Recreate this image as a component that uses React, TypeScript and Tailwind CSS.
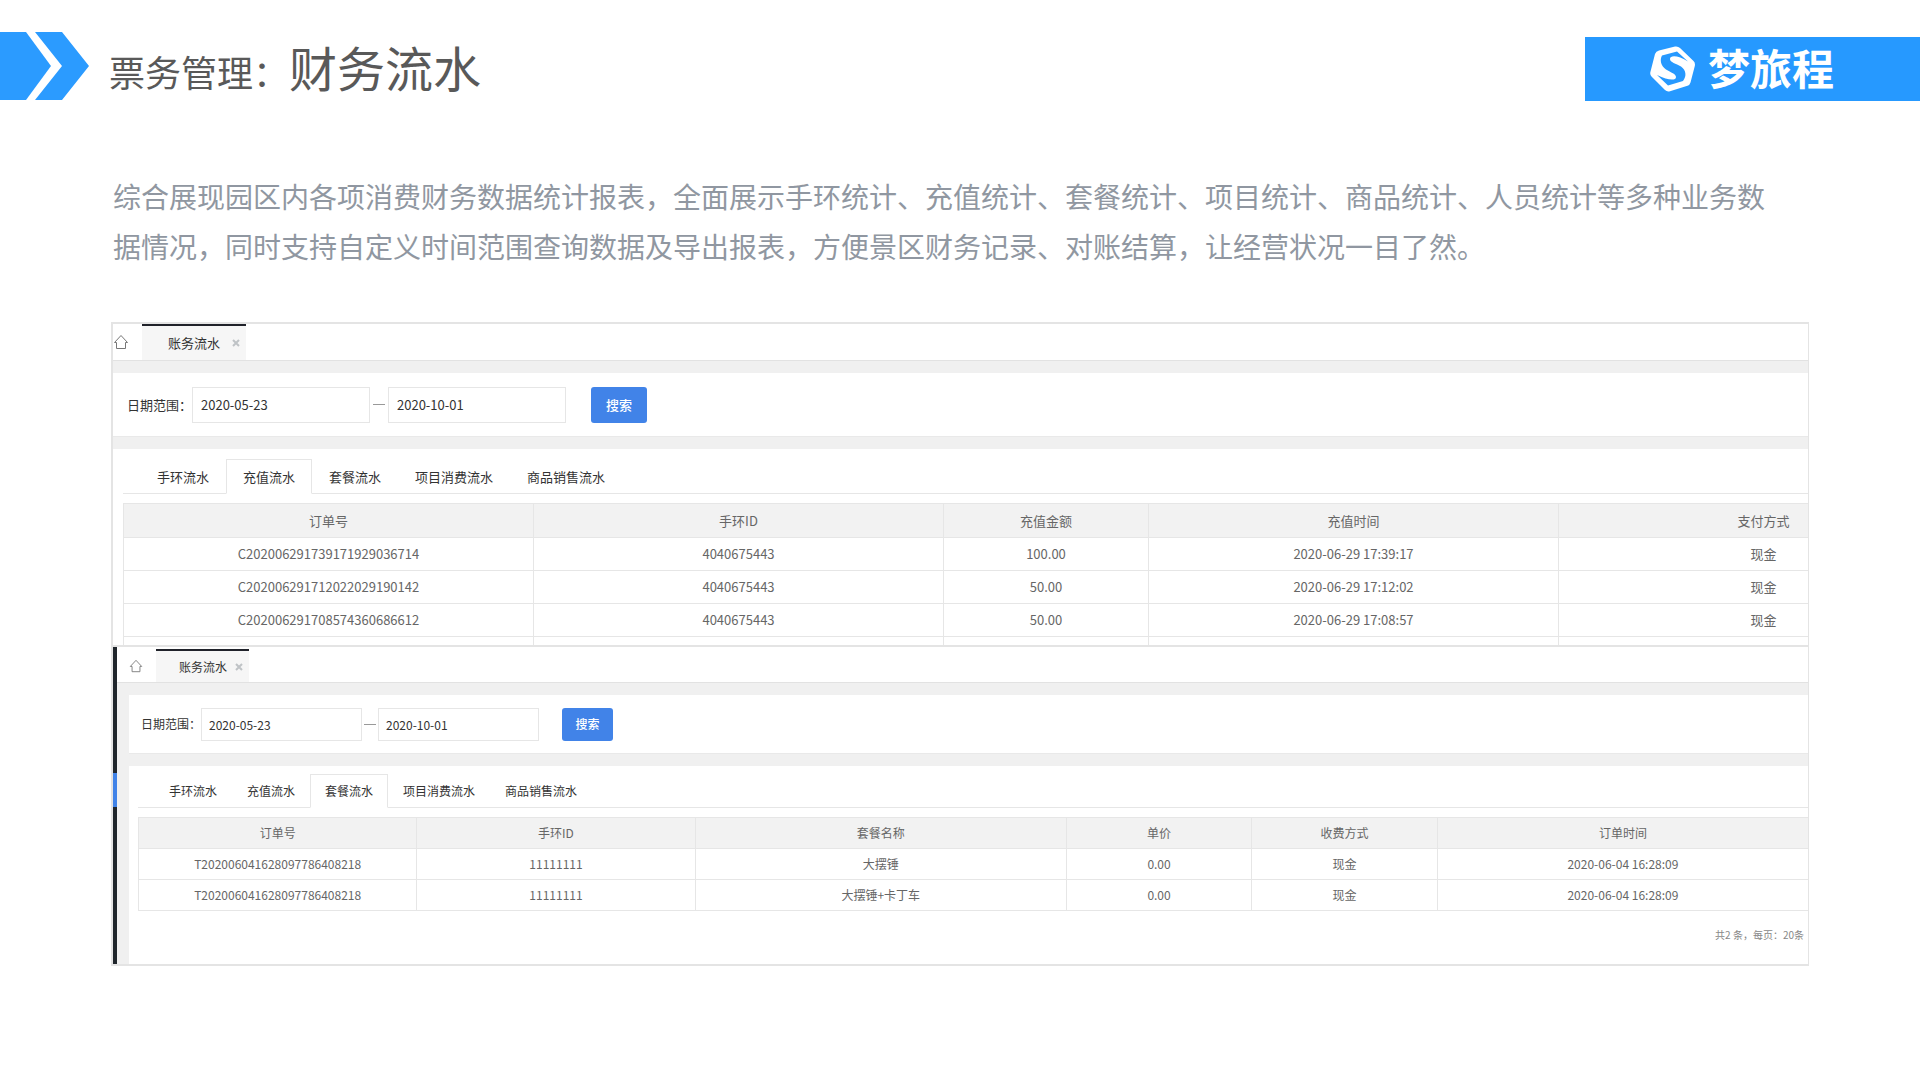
import React, { useState } from "react";

type Size = "lg" | "sm";

interface FlowPanelProps {
  id: string;
  size: Size;
  defaultTab: string;
  columns: { title: string; width: string }[];
  rows: string[][];
  footer?: string;
}

const TABS = ["手环流水", "充值流水", "套餐流水", "项目消费流水", "商品销售流水"];

const rechargeColumns = [
  { title: "订单号", width: "w-[410px]" },
  { title: "手环ID", width: "w-[410px]" },
  { title: "充值金额", width: "w-[205px]" },
  { title: "充值时间", width: "w-[410px]" },
  { title: "支付方式", width: "w-[410px]" },
];

const rechargeRows = [
  ["C202006291739171929036714", "4040675443", "100.00", "2020-06-29 17:39:17", "现金"],
  ["C202006291712022029190142", "4040675443", "50.00", "2020-06-29 17:12:02", "现金"],
  ["C202006291708574360686612", "4040675443", "50.00", "2020-06-29 17:08:57", "现金"],
  ["", "", "", "", ""],
];

const packageColumns = [
  { title: "订单号", width: "w-3/18" },
  { title: "手环ID", width: "w-3/18" },
  { title: "套餐名称", width: "w-4/18" },
  { title: "单价", width: "w-2/18" },
  { title: "收费方式", width: "w-2/18" },
  { title: "订单时间", width: "w-4/18" },
];

const packageRows = [
  ["T202006041628097786408218", "11111111", "大摆锤", "0.00", "现金", "2020-06-04 16:28:09"],
  ["T202006041628097786408218", "11111111", "大摆锤+卡丁车", "0.00", "现金", "2020-06-04 16:28:09"],
];

// Class sets for the two zoom levels of the back office
const sizes = {
  lg: {
    text: "text-[13px]",
    bar: "h-9",
    home: "w-[29px]",
    homeIcon: "h-4 w-4",
    pageTab: "w-[104px] pl-[26px] pr-1.5",
    body: "gap-3 pt-3",
    search: "h-16 pl-[14px]",
    label: "w-[65px]",
    input: "h-9 w-[178px] px-2",
    dash: "w-[18px]",
    button: "ml-[25px] h-9 w-14",
    card: "pt-[10px] pl-[10px]",
    tabs: "h-[35px] pl-[17px] mb-[9px]",
    tab: "px-4",
    table: "w-[1845px]",
    headRow: "h-[34px]",
    row: "h-[33px]",
  },
  sm: {
    text: "text-[12px]",
    bar: "h-[33px] pt-0.5",
    home: "w-[39px] pl-3",
    homeIcon: "h-[14px] w-[14px]",
    pageTab: "w-[93px] pl-[23px] pr-1.5",
    body: "gap-3 pt-3 pl-3",
    search: "h-[59px] pl-3",
    label: "w-[60px]",
    input: "h-[33px] w-[161px] px-[7px]",
    dash: "w-4",
    button: "ml-[23px] h-[33px] w-[51px]",
    card: "pt-2 pl-[9px]",
    tabs: "h-[34px] pl-4 mb-[9px]",
    tab: "px-[14px]",
    table: "w-[calc(100%+1px)]",
    headRow: "h-[31px]",
    row: "h-[31px]",
  },
};

function Chevrons() {
  return (
    <svg width="89" height="68" viewBox="0 0 89 68" fill="#2b9bff" aria-hidden="true">
      <path d="M0 0H26L51 34L26 68H0Z" />
      <path d="M35 0H62L89 34L62 68H35L62 34Z" />
    </svg>
  );
}

function Logo() {
  return (
    <svg width="46" height="46" viewBox="0 0 46 46" aria-hidden="true">
      <path
        d="M9 4.500L25 .5Q28 0 30 2L43.500 15Q45.500 17 44.800 20L40.500 36.500Q39.800 39 37.500 39.800L20 45.200Q17 46 15 44L1.500 30.500Q-.3 28.500 .4 26L5 8Q6 5.200 9 4.500Z"
        fill="#fff"
      />
      <path
        d="M38 15.500L27 5.500L12 9.500C9.500 14 11 20 16 23.500C21 26.500 26 28 26 31C26 35 18 34.500 7 29L18 39.500L33 35C37 30 36 24 31 20.500C26 17.500 20 16.500 20 13C20 8.500 29 9.500 38 15.500Z"
        fill="#2699ff"
      />
    </svg>
  );
}

function HomeIcon({ className }: { className: string }) {
  return (
    <svg className={className} viewBox="0 0 16 16" fill="none" stroke="#777" aria-hidden="true">
      <path d="M3.500 8.500H1.500L8 1.500L14.500 8.500H12.500V14.500H3.500Z" />
    </svg>
  );
}

function CloseIcon() {
  return (
    <svg width="8" height="8" viewBox="0 0 8 8" stroke="#bfc3c6" strokeWidth="2" aria-hidden="true">
      <path d="M1 1L7 7M7 1L1 7" />
    </svg>
  );
}

function FlowPanel({ id, size, defaultTab, columns, rows, footer }: FlowPanelProps) {
  const [activeTab, setActiveTab] = useState(defaultTab);
  const [from, setFrom] = useState("2020-05-23");
  const [to, setTo] = useState("2020-10-01");
  const s = sizes[size];

  return (
    <div className={`flex min-w-0 flex-1 flex-col bg-[#f0f0f0] text-[#333] ${s.text}`}>
      {/* PAGE TABS */}
      <div className={`box-content flex shrink-0 border-b border-[#e2e2e2] bg-white ${s.bar}`}>
        <a href="#home" aria-label="首页" className={`flex items-center ${s.home}`}>
          <HomeIcon className={s.homeIcon} />
        </a>
        <div
          className={`flex items-center justify-between border-t-2 border-[#20222a] bg-[#f6f6f6] whitespace-nowrap ${s.pageTab}`}
        >
          <span>账务流水</span>
          <button type="button" aria-label="关闭">
            <CloseIcon />
          </button>
        </div>
      </div>

      <div className={`flex flex-1 flex-col ${s.body}`}>
        {/* SEARCH */}
        <form
          className={`flex shrink-0 items-center border-b border-[#e9e9e9] bg-white ${s.search}`}
          onSubmit={(e) => e.preventDefault()}
        >
          <label htmlFor={`${id}-from`} className={`whitespace-nowrap ${s.label}`}>
            日期范围：
          </label>
          <input
            id={`${id}-from`}
            value={from}
            onChange={(e) => setFrom(e.target.value)}
            className={`border border-[#e6e6e6] bg-white ${s.input}`}
          />
          <span className={`flex justify-center ${s.dash}`}>
            <span className="h-px w-3 bg-[#999]" />
          </span>
          <input
            aria-label="结束日期"
            value={to}
            onChange={(e) => setTo(e.target.value)}
            className={`border border-[#e6e6e6] bg-white ${s.input}`}
          />
          <button
            type="submit"
            className={`rounded-[3px] bg-[#4183e8] font-medium text-white ${s.button}`}
          >
            搜索
          </button>
        </form>

        {/* TABLE */}
        <div className={`flex-1 overflow-hidden bg-white ${s.card}`}>
          <div role="tablist" className={`flex border-b border-[#e6e6e6] ${s.tabs}`}>
            {TABS.map((tab) => (
              <button
                key={tab}
                type="button"
                role="tab"
                aria-selected={tab === activeTab}
                onClick={() => setActiveTab(tab)}
                className={`-mb-px border ${s.tab} ${
                  tab === activeTab
                    ? "border-[#e6e6e6] border-b-white bg-white"
                    : "border-transparent border-b-[#e6e6e6]"
                }`}
              >
                {tab}
              </button>
            ))}
          </div>
          <table className={`table-fixed border-collapse text-center text-[#666] ${s.table}`}>
            <thead>
              <tr className={`bg-[#f2f2f2] ${s.headRow}`}>
                {columns.map((col) => (
                  <th key={col.title} className={`border border-[#e6e6e6] font-normal ${col.width}`}>
                    {col.title}
                  </th>
                ))}
              </tr>
            </thead>
            <tbody>
              {rows.map((row, i) => (
                <tr key={i} className={s.row}>
                  {row.map((cell, j) => (
                    <td key={j} className="border border-[#e6e6e6]">
                      {cell}
                    </td>
                  ))}
                </tr>
              ))}
            </tbody>
          </table>
          {footer && <p className="mt-4 pr-1 text-right text-[10px] text-[#888]">{footer}</p>}
        </div>
      </div>
    </div>
  );
}

export default function App() {
  return (
    <div className="min-h-screen bg-white font-['Noto_Sans_CJK_SC',sans-serif]">
      {/* HEADER */}
      <header className="flex items-start justify-between pt-8">
        <div className="flex items-start">
          <Chevrons />
          <h1 className="ml-5 text-[48px] leading-[68px] text-[#595959]">
            <span className="text-[36px] leading-none">票务管理：</span>财务流水
          </h1>
        </div>
        <div className="mt-[5px] flex h-16 w-[335px] items-center bg-[#2699ff] pl-[65px] text-white">
          <Logo />
          <span className="ml-3 pb-1 text-[42px] leading-[60px] font-bold">梦旅程</span>
        </div>
      </header>

      {/* TEXT */}
      <p className="mt-[70px] pr-[140px] pl-[113px] text-[28px] leading-[50px] text-[#9097a1]">
        综合展现园区内各项消费财务数据统计报表，全面展示手环统计、充值统计、套餐统计、项目统计、商品统计、人员统计等多种业务数据情况，同时支持自定义时间范围查询数据及导出报表，方便景区财务记录、对账结算，让经营状况一目了然。
      </p>

      {/* SCREENS */}
      <main className="mx-[111px] mt-[51px] border-y-2 border-r border-l-2 border-[#e4e4e4]">
        <section className="flex h-[323px] overflow-hidden border-b-2 border-[#e4e4e4]">
          <FlowPanel
            id="recharge"
            size="lg"
            defaultTab="充值流水"
            columns={rechargeColumns}
            rows={rechargeRows}
          />
        </section>
        <section className="flex h-[317px] overflow-hidden">
          <div className="w-1 bg-[#20262c] pt-[126px]">
            <div className="h-[34px] bg-[#4183e8]" />
          </div>
          <FlowPanel
            id="package"
            size="sm"
            defaultTab="套餐流水"
            columns={packageColumns}
            rows={packageRows}
            footer="共2 条，每页：20条"
          />
        </section>
      </main>
    </div>
  );
}
